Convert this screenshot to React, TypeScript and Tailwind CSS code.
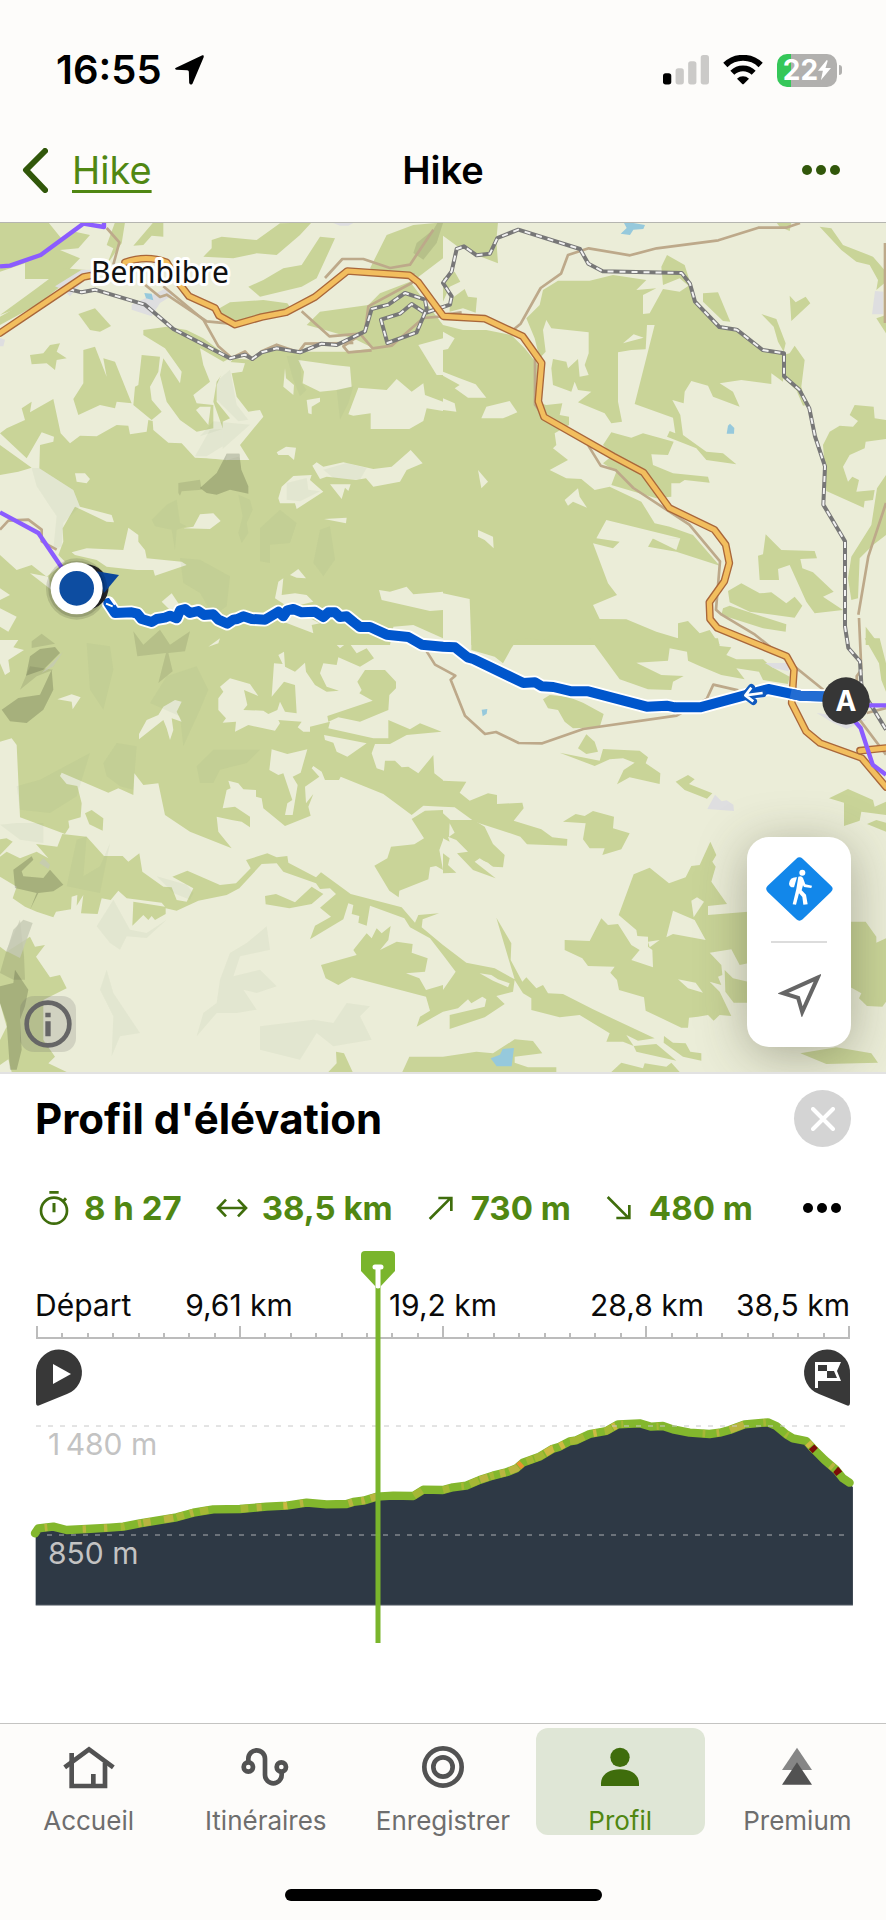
import React from "react";

interface Tile {
  x: number;
  y: number;
  forest: string[];
  clearing: string[];
}

interface Stat {
  label: string;
  value: string;
  icon: React.ReactNode;
}

interface Tab {
  title: string;
  icon: React.ReactNode;
  active?: boolean;
}

type Point = [number, number];

// Land cover, one entry per map tile. Every string is a closed polygon.
const tiles: Tile[] = [
  {
    x: 0,
    y: -24,
    forest: [
      "0,22 145,22 188,75 225,50 270,60 235,100 180,105 240,130 180,192 75,192 75,145 0,170",
      "345,22 375,22 365,85 320,150 340,100 320,90",
      "400,92 460,22 490,22 490,65 455,62 430,90",
      "635,75 665,65 770,75 840,25 935,22 900,60 830,120 770,115 700,130 610,125 635,100",
      "790,195 850,160 905,150 960,65 1005,70 950,190 905,215 780,245 745,215",
      "1110,160 1160,60 1240,30 1329,22 1329,130 1250,190 1160,185 1120,165",
      "690,262 790,255 862,265 880,290 800,310 720,325 640,290",
      "0,305 160,215 200,200 110,270 0,330",
      "0,300 110,220 190,160 260,165 40,285",
      "235,297 285,280 333,333 300,350 270,345",
      "90,420 130,415 150,390 180,385 170,410 200,430 170,435 165,465 140,445 95,448",
      "250,405 285,395 320,485 310,430 345,440 395,565 350,560 345,580 300,570 235,600 220,552 250,505",
      "430,345 500,335 560,345 610,370 690,430 670,440 600,400 610,450 630,500 580,540 590,565 640,570 640,640 590,650 540,615 500,560 480,480 490,430 540,505 545,470 495,400 430,360",
      "425,420 480,425 475,470 450,515 455,555 485,590 455,615 400,570 405,515 415,510",
      "0,655 20,640 75,615 65,580 95,560 90,592 160,552 182,655 210,685 240,662 290,664 350,630 385,632 390,658 440,650 445,615 458,618 460,645 505,683 545,685 585,728 670,732 670,645 640,560 650,500 700,430 760,435 800,400 900,410 1040,410 1120,400 1060,370 975,345 920,330 960,290 1105,270 1140,235 1230,200 1329,330 1329,1290 0,1290",
    ],
    clearing: [
      "680,440 735,445 727,470 695,475 710,545 745,590 780,585 790,605 720,690 748,735 675,735 585,725 610,660 668,640 668,620 690,610 650,560 650,510",
      "855,460 858,490 882,510 880,540 850,515",
      "895,435 965,445 1000,450 1050,455 1055,515 1010,525 960,530 908,505 912,470",
      "920,555 960,548 960,560 935,575 935,598 925,595",
      "1045,598 1075,518 1160,525 1190,492 1235,530 1270,505 1275,540 1329,560 1329,588 1280,580 1270,618 1228,642 1112,642 1112,595 1060,602",
      "1255,390 1329,370 1329,480 1310,480",
      "600,575 632,575 625,630 588,585",
      "830,712 858,695 888,698 882,735 865,720 835,720",
      "937,752 950,742 970,755 1030,742 1120,762 1175,755 1232,705 1268,745 1220,765 1200,800 1120,815 1098,790 1068,795 980,785 960,792",
      "845,815 880,783 935,780 930,795 970,830 890,882 885,865 840,865 835,850",
      "990,808 1052,808 1045,828 1035,818 1025,852",
      "972,912 1040,908 1038,925",
      "225,775 255,775 270,792 260,805 230,800",
      "0,780 55,770 95,758 0,690 0,655 80,730 125,652 162,665 160,680 120,690 118,760 220,825 240,875 335,900 342,922 320,920 225,875 188,940 190,980 175,1020 195,1040 140,1085 95,1050 50,1065 0,1020",
      "215,1012 260,1000 370,1005 385,938 415,960 415,980 435,1005 440,1030 545,1040 560,1050 465,1082 460,1065 410,1065 320,1055 290,1035 225,1020",
      "550,940 580,935 600,898 640,895 662,918 630,942",
      "90,1075 145,1085 155,1125",
      "825,1150 835,1100 850,1090 845,1140 885,1135 920,1140 940,1160 900,1170 910,1200 960,1225 935,1230 940,1255 850,1220 870,1180",
      "870,1080 895,1062 918,1090 890,1088",
      "1137,1125 1170,1130 1220,1115 1240,1138 1329,1130 1329,1185 1290,1188 1145,1155",
      "1170,1290 1180,1235 1240,1230 1329,1270 1329,1290",
      "485,1160 515,1135 545,1180 510,1185",
      "0,1120 30,1140 0,1155",
      "0,1180 50,1205 25,1250 0,1235",
    ],
  },
  {
    x: 1329,
    y: -24,
    forest: [
      "0,22 165,22 160,75 165,145 100,120 60,90 45,95 0,62",
      "0,190 35,170 52,200 20,215 0,260",
      "20,255 65,222 75,245 102,248 98,293 60,280 20,290",
      "0,330 60,345 130,345 205,360 245,400 285,450 275,560 310,570 358,565 350,600 378,605 378,630 335,655 340,690 330,700 375,735 320,765 370,790 415,792 455,825 500,815 595,860 635,925 680,935 750,960 830,1052 700,1010 615,995 630,970 712,970 490,915 460,970 530,980 510,1000 450,985 495,1105 522,1140 450,1170 470,1212 550,1213 640,1250 705,1270 705,1225 735,1218 770,1255 800,1245 830,1290 0,1290",
      "300,225 345,197 440,197 510,180 610,195 580,225 640,220 600,240 600,297 620,295 660,222 710,230 740,210 755,260 830,335 880,345 960,405 1020,415 1020,500 985,475 985,507 895,495 830,505 870,530 890,575 810,545 795,512 745,498 725,530 722,565 688,555 712,600 720,660 790,710 840,715 880,748 790,735 760,700 672,665 680,648 697,655 690,608 575,567 635,330 612,330 608,403 565,405 525,412 525,560 537,620 505,625 485,595 405,562 445,530 405,525 395,500 385,530 330,510 325,460 330,432 370,440 375,460 405,432 410,485 437,480 425,450 437,415 437,352 325,340 310,315 300,345 308,410 290,430 275,370 250,310 290,270",
      "655,155 672,120 725,150 760,262 740,215 710,190 660,210",
      "780,235 825,232 862,320 840,318 780,260",
      "1130,35 1165,40 1200,90 1290,125 1329,170 1329,200 1300,225 1305,195 1280,150 1240,140 1195,105",
      "1000,22 1045,22 1040,48 1010,35",
      "1040,242 1058,262 1088,245 1102,265 1045,318",
      "955,297 1000,312 1028,385 1022,410 1005,380 992,335",
      "1055,392 1085,435 1075,515 1090,570 1080,572 1060,525 1020,490 1020,420 1040,415",
      "505,652 565,668 600,655 692,680 675,720 625,718 630,750 690,775 795,785 800,803 725,795 710,805 685,805 685,845 640,850 505,810 520,770 480,745 510,720 480,690",
      "1140,690 1160,650 1190,632 1230,635 1245,618 1220,600 1235,570 1292,575 1295,610 1329,615 1329,672 1268,680 1265,700 1220,720 1200,755 1215,800 1228,785 1248,795 1240,830 1295,825 1290,855 1265,858 1262,878 1150,828",
      "1302,820 1329,780 1329,960 1290,990 1250,1030 1245,1150 1225,1155 1215,1090 1225,1025 1285,930",
      "1300,310 1329,300 1329,355",
      "945,1022 960,1018 968,958 1015,1005 1115,1008 1122,1030 1072,1032 1078,1060 1110,1072 1172,1130 1140,1145 1200,1185 1115,1195 1090,1160 1040,1050 1005,1062 1008,1095 950,1095",
      "855,1128 895,1105 950,1135 985,1132 1030,1165 1055,1145 1078,1172 1055,1208 920,1190 860,1162",
      "840,1180 860,1172 960,1205 1030,1228 1028,1250 960,1240 835,1200",
      "1268,1235 1310,1290 1268,1290",
    ],
    clearing: [
      "0,1135 80,1152 85,1290 0,1290",
      "105,765 135,800 115,820",
      "365,855 405,820 410,845 432,878 390,860 375,872",
      "105,945 150,965 152,1000 125,975 105,965",
      "115,610 130,575 200,558 223,592 180,610",
      "0,550 35,565 40,590 0,585",
      "0,470 50,490 98,508 130,548 75,548 35,520 50,510 0,482",
      "0,405 0,350 35,370 15,402",
      "540,385 572,358 602,368 565,378",
      "625,968 712,970 700,1005",
    ],
  },
  {
    x: 0,
    y: 1251,
    forest: [
      "0,-5 990,-5 1020,25 1045,5 1070,40 1100,25 1122,55 1080,80 1015,52 1010,75 970,70 960,100 980,140 1017,152 980,155 945,135 918,95 915,68 885,95 855,80 852,35 835,45 848,72 822,70 815,170 852,125 885,135 890,220 855,215 840,185 832,210 805,222 790,212 730,210 742,195 732,150 775,168 750,132 690,115 660,140 670,155 655,175 655,210 678,235 668,248 708,245 705,275 745,255 825,272 840,250 835,240 905,245 893,262 910,275 930,275 930,260 990,245 985,265 1120,295 1165,295 1165,240 1230,268 1260,250 1325,275 1220,285 1170,312 1125,312 1115,340 1130,385 1152,392 1155,362 1185,362 1205,382 1225,380 1255,400 1300,345 1303,400 1329,420 1329,500 1270,497 1235,525 1150,462 1022,410 1017,420 975,420 965,395 940,378 935,385 958,410 915,440 918,490 940,462 925,500 932,527 855,558 790,505 785,475 768,470 768,450 730,448 715,430 685,422 692,445 680,450 668,505 705,500 750,530 750,562 725,545 695,540 650,530 655,575 695,625 570,575 495,525 475,430 430,435 403,400 400,465 355,445 325,458 185,398 180,408 200,432 232,438 245,490 242,532 205,542 208,562 195,582 60,532 50,315 35,295 0,305",
      "1095,90 1155,90 1188,125 1188,145 1168,165 1165,210 1080,245 1015,232 985,245 982,228 1118,182 1078,160 1085,150 1072,125",
      "108,612 172,620 187,582 260,590 312,648 368,648 385,665 418,640 427,695 490,740 515,742 530,780 560,785 580,745 517,710 562,692 660,735 708,730 752,685 738,660 802,640 830,652 862,648 865,668 948,712 963,697 1052,762 1205,802 1245,848 1255,825 1317,820 1268,838 1265,862 1329,915 1329,945 1290,895 1230,862 1213,835 1110,797 1100,857 1075,848 1078,828 1055,822 1060,795 1045,790 1030,838 930,898 945,857 993,830 960,803 1008,762 990,745 960,747 948,730 850,695 830,670 785,672 718,745 680,765 595,782 530,812 497,805 497,822 465,840 455,828 445,840 430,825 397,857 400,785 495,800 485,788 380,775 355,752 332,780 305,775 293,822 243,820 250,765 230,797 232,765 215,770 213,808 168,815 160,832 110,815 75,800 38,775 50,740 0,710 0,650 20,635 60,655 110,635 145,655",
      "795,768 828,762 885,787 935,740 970,762 935,792 868,805 797,793",
      "255,520 275,510 310,535 308,572 268,553",
      "0,598 20,595 38,605 0,645",
      "1235,537 1275,512 1329,510 1329,600 1318,630 1329,690 1308,678 1290,682 1285,718 1198,752 1196,772 1168,752 1123,677 1162,655 1173,620 1243,613 1272,595",
      "963,975 1070,945 1060,930 1100,880 1115,895 1130,865 1145,880 1172,858 1165,900 1140,930 1190,905 1238,912 1235,938 1283,955 1275,995 1218,1000 1258,1015 1278,1050 1329,1035 1329,1115 1250,1160 1260,1130 1290,1112 1278,1070 1055,1012 1015,1035 977,1015",
      "985,1296 1010,1270 1008,1235 1032,1240 1058,1296",
      "1207,1296 1228,1250 1329,1250 1329,1296",
      "0,920 20,935 90,890 105,920 135,915 108,950 150,1012 180,1005 200,1045 130,1080 130,1200 165,1250 145,1270 200,1296 0,1296",
    ],
    clearing: [
      "417,282 440,240 475,225 490,200 525,180 545,185 530,215 545,245 515,235 520,270 510,300 500,265 490,240 417,298",
      "172,178 215,163 242,172 218,208 215,185",
      "972,285 1100,310 1042,350 1010,335 1000,308 975,300",
      "815,328 862,342 922,328 902,398 878,410 893,435 878,525 855,525 862,490 877,480 850,400 835,405 808,390",
      "0,0 55,0 40,22 72,30 25,60 30,95 15,105 0,70",
      "625,20 660,-5 655,10",
      "0,1090 20,1160 0,1200",
      "0,1275 25,1258 35,1296 0,1296",
    ],
  },
  {
    x: 1329,
    y: 1251,
    forest: [
      "85,-5 225,-5 205,25 180,70 155,50 85,30",
      "440,-5 825,-5 830,18 865,22 850,45 880,58 960,58 985,80 1040,110 1035,132 960,120 948,95 880,85 905,118 835,105 770,78 735,62 732,35 680,25 675,62 580,68 655,105 722,108 690,125 685,150 615,148 530,118",
      "240,-5 400,-5 400,5",
      "300,178 320,165 375,170 420,188 482,222 470,262 390,265 365,245 345,210 315,205",
      "405,325 430,283 455,305 465,335 430,342",
      "350,338 470,362 480,327 590,332 615,352 608,370 652,400 650,432 560,412 522,433 542,390 575,368 540,355 500,358 455,378",
      "698,425 735,405 755,418 738,432 808,460 792,476 725,450",
      "0,422 70,425 50,458 80,482 135,460 162,465 162,492 238,488 242,505 212,542 295,568 328,592 373,597 372,617 252,613 232,590 95,545 35,502 0,500",
      "0,520 22,540 92,540 125,560 150,612 185,645 180,682 150,680 110,655 95,665 158,715 90,690 42,640 75,635 40,600 15,590 20,605 0,595",
      "0,640 20,655 15,675 40,698 0,700",
      "360,545 398,522 425,528 450,513 513,530 510,565 560,580 535,628 478,645 485,625 440,625 420,598 428,550",
      "1158,475 1215,447 1290,480 1295,500 1329,485 1329,525 1255,515 1250,542 1203,558 1203,488",
      "1272,552 1300,540 1329,548 1329,575",
      "1265,-5 1310,-5 1329,70 1329,155 1315,120 1308,70",
      "527,825 572,703 620,683 678,730 728,712 745,678 770,675 802,605 820,645 808,665 818,680 805,725 852,792 795,798 795,825 915,815 915,970 890,975 865,928 800,938 835,975 838,1005 825,1010 835,1035 800,1025 830,1055 865,1128 830,1125 812,1142 795,1125 765,1130 738,1133 735,1163 715,1163 608,1112 603,1072 528,1050 522,1020 502,998 515,980 435,978 418,955 365,930 365,900 440,903 475,835 495,855 525,852 565,915 590,930 565,960 630,982 628,930 615,920 615,890 583,888 580,870",
      "845,990 870,1015 915,1025 915,1088 872,1088 847,1055",
      "1220,845 1268,845 1300,890 1300,908 1329,895 1329,1085 1318,1100 1272,1098 1248,1075 1255,1060 1220,1040",
      "0,915 70,968 155,985 215,1018 160,833 205,910 203,960 238,1025 250,1012 280,1045 300,1035 315,1060 360,1062 450,1108 635,1195 585,1202 550,1185 572,1218 540,1205 490,1205 500,1180 410,1125 350,1132 265,1110 265,1075 240,1060 215,1020 210,1055 160,1068 185,1092 125,1132 20,1167 20,1125 125,1100 130,1078 118,1070 85,1090 75,1078 45,1105 0,1115 0,1050 38,995 0,945",
      "572,1218 640,1212 700,1262 580,1235",
      "663,1188 690,1208 728,1210 742,1235 775,1240 775,1262 720,1250 662,1208",
      "0,1250 100,1235 150,1240 215,1198 270,1203 298,1240 215,1250 215,1268 255,1282 340,1282 340,1296 0,1296",
      "505,1296 535,1268 600,1285 605,1270 670,1280 685,1268 710,1296",
      "1072,1240 1180,1222 1285,1240 1305,1268 1150,1272",
    ],
    clearing: [
      "690,812 755,840 788,900 690,882 670,892",
      "745,782 762,772 783,785 752,832",
      "705,1018 758,1028 780,1058 735,1045",
      "110,1000 145,1005 165,1018 200,1030 195,1042 150,1022",
      "20,550 35,578 18,590",
      "108,658 135,668 150,682 130,685",
      "650,900 620,922 615,905",
    ],
  },
];

// Relief shading drawn over the land cover
const lightShade = [
  "650,475 690,440 710,545 745,590 715,595 650,530",
  "585,700 630,620 668,618 668,670 620,700",
  "640,595 750,605 668,678 668,618 600,640",
  "860,780 920,765 925,800 960,805 900,835 860,830",
  "970,740 1040,720 1100,735 1080,770 1000,765",
  "95,735 118,735 220,800 240,850 190,900 185,970 160,980 170,880 110,790",
  "455,890 500,845 530,830 540,900 560,910 530,920 525,980 515,920 465,910",
  "715,815 750,830 758,860 740,900 745,930 725,960 715,930 728,880",
  "540,1005 600,1010 690,1060 680,1150 640,1180 600,1110 550,1080",
  "780,915 840,860 890,900 870,960 810,965 810,1020 780,1015",
  "960,920 990,910 1005,1010 970,1060 940,1020",
  "860,400 900,395 905,480 920,500 900,520 880,470",
  "1010,500 1060,490 1045,540 1020,590",
  "260,1260 330,1270 340,1340 310,1460 270,1400",
  "590,1330 625,1400 600,1460 550,1570 540,1480 450,1440 500,1360",
  "310,1620 350,1560 410,1570 400,1700 360,1690 320,1660",
  "590,1630 640,1580 780,1580 740,1620 660,1640 640,1680 600,1680",
  "50,1690 120,1670 270,1590 230,1720 150,1770 60,1760",
  "200,1990 230,1850 260,1840 250,1960 300,1930 330,1860 300,2010",
  "290,2110 340,2030 390,2120 440,2130 500,2090 440,2145 380,2140 360,2180 330,2160",
  "470,1960 560,1985 580,2010 570,2030 520,2010",
  "300,2300 320,2240 340,2310 420,2430 360,2440 335,2500 340,2380",
  "590,2440 610,2370 650,2340 660,2270 690,2190 740,2160 800,2110 810,2180 720,2200 700,2260 780,2240 830,2290 770,2310 730,2300 770,2360 710,2370 650,2370",
  "780,2410 940,2390 1000,2400 1040,2340 1110,2350 1080,2380 1115,2450 1000,2470 950,2430 900,2510 780,2480",
  "0,1805 50,1800 130,1800 130,1860 60,1850",
];

const midShade = [
  "535,780 600,770 605,800 545,805 540,818 535,810",
  "1250,60 1300,20 1312,0 1329,0 1310,60 1270,110 1240,90",
  "400,1225 430,1265 480,1220 510,1265 570,1225 555,1285 505,1290 518,1345 475,1380 498,1290 412,1300",
  "95,1255 125,1232 165,1262 95,1275",
  "20,2180 60,2090 72,2200 75,2270 40,2270 0,2250",
  "60,1400 90,1330 160,1340 110,1360",
];

const darkShade = [
  "680,692 718,692 724,740 745,790 745,812 690,800 650,815 620,810 600,795 650,750",
  "90,1300 120,1278 165,1272 180,1290 130,1340 78,1358",
  "5,1460 55,1425 120,1415 155,1340 160,1400 130,1460 80,1500 30,1495",
  "40,1940 95,1900 100,1910 65,1945 70,1960 130,1965 150,1940 190,1985 160,2005 115,2010 90,2060 110,2010 45,1995",
  "0,2290 40,2280 45,2240 85,2300 75,2350 60,2390 65,2480 50,2540 30,2540 20,2400 0,2340",
];

// Bare slopes that catch the shade
const greyShade = [
  "680,692 718,692 720,700 678,712",
  "125,1350 188,1288 160,1330",
  "70,2090 98,2100 60,2205 20,2185 40,2120",
  "118,1920 130,1905 150,1925 145,1938",
];

const lakes = [
  "1872,0 1900,0 1935,6 1930,18 1900,20 1890,36 1862,32 1880,15",
  "2190,602 2203,615 2202,632 2180,632 2184,608",
  "433,210 455,212 460,232 438,226",
  "1445,1460 1462,1458 1460,1472 1448,1480",
  "1472,2506 1500,2495 1508,2478 1542,2475 1535,2530 1490,2530",
];

const towns = [
  "165,190 245,140 280,140 210,220 190,200",
  "395,245 500,195 520,215 480,240 455,280 395,260",
  "2625,204 2650,206 2650,274 2616,274",
  "2295,1320 2370,1320 2365,1345 2320,1335",
  "2450,1470 2530,1480 2600,1490 2540,1518 2500,1500",
  "2122,1758 2145,1715 2165,1735 2180,1732 2200,1745 2202,1764",
  "0,345 15,350 10,370 0,370",
  "1000,0 1060,0 1045,8 1020,8",
];

const tracks = [
  "M320 15 L358 58 340 125",
  "M435 185 L480 222 500 215 620 295 690 302",
  "M490 190 L610 290 655 370 695 405 735 385 757 410 785 385 830 365 895 388 915 362 1060 360",
  "M905 265 L988 340 1080 332 1118 376 1175 368 1270 285 1329 280",
  "M975 165 L1027 108 1090 108 1170 135 1230 125 1300 20",
  "M1240 150 L1235 180 1105 250 1095 325 1030 370 1045 388 1115 382",
  "M1540 320 L1562 302 1622 195 1683 152 1704 96 1766 76 1890 97 1970 76 2155 52 2275 14 2358 14 2400 0",
  "M1335 275 L1385 268 M1605 405 V545 L1640 590",
  "M1765 668 L1802 728 1848 742 1900 795 2068 905 2160 1015 2148 1160 2165 1175 2265 1235 2470 1400",
  "M2658 840 L2605 1000 2575 1175 M2577 1185 L2584 1340 2570 1360 2572 1400 M2655 60 V300",
  "M0 920 L25 893 85 890 125 920 125 955 170 980",
  "M1280 1285 L1305 1325 1366 1358 1352 1370 1395 1478 1455 1533 1488 1527 1556 1560 1627 1561 1750 1518 2030 1478 2120 1428 2140 1385 2215 1402",
  "M2560 1465 L2658 1595 M2600 1470 L2658 1455",
];

const highways = [
  "M0 330 L250 162 270 158 M375 118 Q440 95 500 118 L540 185 567 220 645 255 657 278 705 305 785 282 858 268 945 222 1042 144 1228 157 1255 178 1330 280 1455 287 1568 340 1625 420 1615 535 1632 582 1840 700 1930 748 2008 855 2143 920 2177 965 2188 1020 2173 1075 2128 1138 2130 1188 2152 1215 2360 1300 2382 1340 2375 1440 2418 1525 2460 1560 2585 1605 2658 1692",
  "M2658 1575 L2580 1583",
];

const railways = [
  "M205 198 L245 208 285 200 435 245 520 318 690 406 735 395 757 408 785 388 830 376 900 388 965 362 1010 366 1095 325 1115 258 1165 245 1215 210 1275 230 1280 258 1250 328 1162 360 1143 290 1200 272 1235 243 1275 270 1350 245 1355 220 1329 180 1355 145 1370 78 1392 70 1430 97 1470 92 1492 45 1555 20 1740 78 1765 122 1808 145 2045 150 2070 182 2085 236 2158 312 2210 320 2288 381 2352 391 2352 460 2398 500 2428 556 2445 640 2475 730 2470 845 2535 955 2535 1210 2545 1275 2580 1315 2585 1400 2658 1520",
];

const rides = [
  "M0 130 L30 128 122 96 250 2 312 12 V0",
  "M0 868 L115 930 200 1055",
  "M2600 1447 H2658 M2560 1490 L2582 1515 2618 1625 2658 1655",
];

const route =
  "M325 1140 L345 1170 395 1168 412 1172 425 1188 455 1197 470 1188 495 1184 510 1178 530 1186 540 1162 555 1158 570 1170 595 1164 612 1176 640 1174 655 1190 682 1202 700 1190 712 1188 730 1180 755 1188 795 1190 835 1166 850 1180 862 1162 880 1158 905 1168 945 1166 970 1182 985 1168 1005 1168 1020 1182 1040 1180 1062 1198 1080 1212 1110 1212 1160 1235 1225 1242 1265 1265 1329 1271 1365 1273 1403 1303 1420 1308 1570 1380 1605 1378 1625 1390 1660 1392 1715 1405 1765 1405 1940 1451 2000 1448 2025 1453 2100 1453 2305 1398 2400 1418 2520 1421";

// Elevation samples
const profile: Point[] = [
  [105, 400], [115, 385], [160, 380], [200, 390], [260, 387], [330, 383],
  [370, 380], [420, 370], [470, 362], [530, 352], [580, 338], [640, 328],
  [720, 327], [800, 320], [860, 317], [920, 308], [980, 313], [1040, 312],
  [1060, 306], [1090, 302], [1130, 290], [1180, 287], [1240, 288], [1270, 269],
  [1329, 270], [1359, 262], [1399, 257], [1439, 240], [1479, 227], [1519, 217],
  [1549, 205], [1569, 188], [1619, 170], [1659, 146], [1679, 140], [1709, 124],
  [1729, 121], [1769, 102], [1819, 93], [1854, 73], [1919, 70], [1954, 80],
  [1989, 78], [2019, 88], [2069, 98], [2129, 102], [2159, 98], [2189, 90],
  [2234, 73], [2304, 67], [2329, 78], [2359, 103], [2379, 115], [2419, 123],
  [2439, 145], [2474, 180], [2509, 210], [2529, 235], [2549, 248],
];

// [from, to, colour] stretches where the slope gets steeper
const slopes: [number, number, string][] = [
  [134, 142, "#b9b540"], [248, 258, "#b9b540"], [312, 322, "#b9b540"],
  [362, 374, "#a5b835"], [414, 424, "#b9b540"], [430, 452, "#b9b540"],
  [492, 520, "#b9b540"], [530, 552, "#a5b835"], [570, 580, "#b9b540"],
  [600, 625, "#a5b835"], [722, 745, "#a5b835"], [770, 785, "#b9b540"],
  [850, 862, "#cdb942"], [900, 910, "#b9b540"], [1046, 1058, "#b9b540"],
  [1084, 1094, "#b9b540"], [1112, 1134, "#b9b540"], [1242, 1266, "#a5b835"],
  [1329, 1348, "#a5b835"], [1384, 1392, "#a5b835"], [1410, 1436, "#a5b835"],
  [1440, 1464, "#b9b540"], [1470, 1482, "#a5b835"], [1500, 1516, "#b9b540"],
  [1528, 1554, "#b9b540"], [1556, 1566, "#e8922f"], [1580, 1600, "#a5b835"],
  [1604, 1632, "#a5b835"], [1636, 1660, "#cdb942"], [1680, 1692, "#cdb942"],
  [1710, 1752, "#a5b835"], [1780, 1790, "#cdb942"], [1814, 1836, "#a5b835"],
  [1838, 1848, "#cdb942"], [1864, 1870, "#a5b835"], [1970, 1976, "#a5b835"],
  [2108, 2116, "#a5b835"], [2150, 2158, "#b9b540"], [2190, 2232, "#b9b540"],
  [2290, 2298, "#a5b835"], [2358, 2364, "#a5b835"], [2424, 2433, "#cdb942"],
  [2435, 2446, "#7c0d08"], [2492, 2500, "#b9b540"], [2507, 2518, "#7c0d08"],
];

const heightAt = (x: number) => {
  const i = Math.max(1, profile.findIndex((p) => p[0] >= x));
  const [x0, y0] = profile[i - 1];
  const [x1, y1] = profile[i];
  return y0 + ((x - x0) / (x1 - x0)) * (y1 - y0);
};

const slice = (from: number, to: number) => {
  const inner = profile.filter((p) => p[0] > from && p[0] < to);
  return [[from, heightAt(from)], ...inner, [to, heightAt(to)]].join(" ");
};

const Dots = () => (
  <svg viewBox="0 0 38 10" className="w-[38px]" fill="currentColor">
    <circle cx="5" cy="5" r="5" />
    <circle cx="19" cy="5" r="5" />
    <circle cx="33" cy="5" r="5" />
  </svg>
);

const StatusBar = () => (
  <div className="flex h-[116px] items-center justify-between pt-6 pr-11 pl-14">
    <div className="flex items-center gap-3">
      <span className="text-[40px] leading-none font-semibold">16:55</span>
      <svg viewBox="0 0 94 96" className="w-[31px]">
        <path
          d="M6 42 L86 4 Q92 2 90 10 L56 90 Q50 96 46 88 L45 54 Q45 49 40 49 L7 48 Q0 46 6 42 Z"
          fill="#000"
        />
      </svg>
    </div>
    <div className="flex items-center gap-[14px]">
      <svg viewBox="0 0 139 90" className="w-[46px]">
        <rect x="0" y="55" width="25" height="34" rx="8" fill="#000" />
        <rect x="38" y="40" width="25" height="49" rx="8" fill="#cbcac8" />
        <rect x="76" y="19" width="25" height="70" rx="8" fill="#cbcac8" />
        <rect x="114" y="0" width="25" height="89" rx="8" fill="#cbcac8" />
      </svg>
      <svg viewBox="0 0 120 90" className="w-10">
        <path d="M7 30 A76 76 0 0 1 113 30" fill="none" stroke="#000" strokeWidth="18" />
        <path d="M28 53 A46 46 0 0 1 92 53" fill="none" stroke="#000" strokeWidth="17" />
        <path d="M42 71 A26 26 0 0 1 78 71 L63 86 Q60 89 57 86 Z" fill="#000" />
      </svg>
      <div className="flex items-center gap-[2px]">
        <div className="flex h-[33px] w-[60px] items-center justify-center rounded-[10px] bg-linear-to-r from-[#35c759] from-24% to-[#b1b0ae] to-24% text-white">
          <span className="text-[28px] leading-[33px] font-bold">22</span>
          <svg viewBox="0 0 40 62" className="w-[13px]">
            <path d="M27 0 L0 33 H15 L9 62 L40 25 H23 L30 2 Z" fill="#fff" />
          </svg>
        </div>
        <div className="h-[10px] w-[3px] rounded-r-full bg-[#b1b0ae]" />
      </div>
    </div>
  </div>
);

const Header = () => (
  <header className="grid h-[107px] grid-cols-3 items-center border-b border-[#b5b5b0] px-[22px] pt-[2px] text-[38px] leading-none">
    <a href="#hike" className="flex items-center gap-6 text-[#508712]">
      <svg viewBox="0 0 26 45" className="w-[26px]">
        <path
          d="M23 3 L4 22 L23 42"
          fill="none"
          stroke="#31570a"
          strokeWidth="6"
          strokeLinecap="round"
          strokeLinejoin="round"
        />
      </svg>
      <span className="underline decoration-3 underline-offset-[6px]">Hike</span>
    </a>
    <h1 className="text-center font-semibold">Hike</h1>
    <button aria-label="Plus d'options" className="mr-6 justify-self-end text-[#31570a]">
      <Dots />
    </button>
  </header>
);

const Terrain = () => (
  <svg
    viewBox="0 0 2658 2547"
    preserveAspectRatio="xMidYMid slice"
    className="block h-full w-full"
    fill="none"
    strokeLinejoin="round"
  >
    <rect width="2658" height="2547" fill="#ebedd8" />
    {tiles.map((tile) => (
      <g key={`${tile.x}-${tile.y}`} transform={`translate(${tile.x} ${tile.y})`}>
        {tile.forest.map((points) => (
          <polygon key={points} points={points} fill="#c9d498" />
        ))}
        {tile.clearing.map((points) => (
          <polygon key={points} points={points} fill="#ebedd8" />
        ))}
      </g>
    ))}
    {lightShade.map((points) => (
      <polygon key={points} points={points} fill="#7d9a6e" opacity="0.08" />
    ))}
    {midShade.map((points) => (
      <polygon key={points} points={points} fill="#4b5236" opacity="0.15" />
    ))}
    {darkShade.map((points) => (
      <polygon key={points} points={points} fill="#4b5236" opacity="0.28" />
    ))}
    {greyShade.map((points) => (
      <polygon key={points} points={points} fill="#c6c9b4" opacity="0.8" />
    ))}
    {towns.map((points) => (
      <polygon key={points} points={points} fill="#dedee0" />
    ))}
    {lakes.map((points) => (
      <polygon key={points} points={points} fill="#96c9dc" />
    ))}

    {tracks.map((d) => (
      <path key={d} d={d} stroke="#bda98a" strokeWidth="8" />
    ))}
    {railways.map((d) => (
      <g key={d}>
        <path d={d} stroke="#777" strokeWidth="12" />
        <path d={d} stroke="#f2f2f2" strokeWidth="6" strokeDasharray="18 18" />
      </g>
    ))}
    {highways.map((d) => (
      <g key={d} strokeLinecap="round">
        <path d={d} stroke="#a9673a" strokeWidth="23" />
        <path d={d} stroke="#f2be5e" strokeWidth="15" />
      </g>
    ))}
    {rides.map((d) => (
      <path key={d} d={d} stroke="#8b5cff" strokeWidth="13" />
    ))}

    <text
      x="273"
      y="180"
      fontSize="90"
      fontFamily="'Noto Sans', sans-serif"
      fill="#111"
      stroke="#fff"
      strokeWidth="18"
      paintOrder="stroke"
    >
      Bembibre
    </text>

    {/* Route */}
    <path d={route} stroke="#fff" strokeWidth="41" strokeLinecap="round" />
    <path d={route} stroke="#0056cc" strokeWidth="30" strokeLinecap="round" />
    <path d="M2372 1412 L2400 1418 2480 1421" stroke="#226cd2" strokeWidth="30" />
    <path
      d="M2288 1412 L2236 1417 M2254 1394 L2236 1417 2260 1435"
      stroke="#0f5abf"
      strokeWidth="22"
      strokeLinecap="round"
    />
    <path d="M2288 1410 L2236 1417 M2254 1394 L2236 1417 2260 1435" stroke="#fff" strokeWidth="8" />
    <path d="M318 1142 L338 1150 M330 1124 L345 1145" stroke="#fff" strokeWidth="6" />

    {/* Current position */}
    <circle cx="258" cy="1092" r="68" fill="#2b2b2d" />
    <path d="M290 1045 L357 1056 L312 1110 Z" fill="#0b479b" />
    <circle cx="230" cy="1098" r="92" fill="#000" opacity="0.12" />
    <circle cx="230" cy="1098" r="85" fill="#000" opacity="0.14" />
    <circle cx="230" cy="1096" r="65" fill="#0d4da1" stroke="#fff" strokeWidth="26" />

    {/* Start */}
    <circle cx="2538" cy="1434" r="71" fill="#363636" />
    <text
      x="2538"
      y="1464"
      textAnchor="middle"
      fontSize="84"
      fontWeight="700"
      fontFamily="Inter, sans-serif"
      fill="#fff"
    >
      A
    </text>
  </svg>
);

const MapView = () => (
  <section aria-label="Carte" className="relative aspect-[886/849] w-full overflow-hidden">
    <Terrain />
    <button
      aria-label="Informations"
      className="absolute bottom-5 left-5 flex size-14 items-center justify-center rounded-[14px] bg-[#6b6b6b]/20"
    >
      <svg viewBox="0 0 144 144" className="size-12">
        <circle cx="72" cy="72" r="64" fill="none" stroke="#666" strokeWidth="14" />
        <path d="M64 38 h16 v14 h-16 Z M64 64 h16 v45 h-16 Z" fill="#666" />
      </svg>
    </button>
    <div className="absolute right-[35px] bottom-[25px] flex h-[210px] w-[104px] flex-col items-center rounded-[22px] bg-white shadow-[0_8px_50px_rgba(60,60,40,0.38)]">
      <button aria-label="Type de carte" className="flex h-[104px] w-full items-center justify-center">
        <svg viewBox="0 0 201 192" className="w-[67px]">
          <path
            d="M91 5 Q100 -3 110 5 L195 86 Q205 95 195 105 L110 187 Q100 195 91 187 L5 105 Q-4 95 5 86 Z"
            fill="#1287ea"
          />
          <g fill="#fff">
            <circle cx="109" cy="47" r="9" />
            <path d="M93 61 L84 91 Q70 92 69 80 Q72 59 93 61 Z" />
            <path d="M97 59 Q107 55 111 63 L118 82 L138 86 L136 93 L114 90 L111 85 L107 100 L120 113 L125 142 L112 143 L109 120 L99 109 L90 143 L80 142 L91 96 Z" />
          </g>
        </svg>
      </button>
      <div className="h-[2px] w-14 bg-[#dcdcdc]" />
      <button aria-label="Me localiser" className="flex h-[104px] w-full items-center justify-center">
        <svg viewBox="0 0 128 128" className="w-[43px]">
          <path
            d="M118 11 L15 57 L60 71 L72 113 Z"
            fill="none"
            stroke="#666"
            strokeWidth="12"
          />
        </svg>
      </button>
    </div>
  </section>
);

const stats: Stat[] = [
  {
    label: "Durée",
    value: "8 h 27",
    icon: (
      <svg viewBox="0 0 96 102" className="w-8" fill="none" stroke="#3f6d0c" strokeWidth="8">
        <circle cx="48" cy="59" r="39" />
        <path d="M34 4 H62 M48 36 V64 M75 32 L84 22" strokeWidth="9" />
      </svg>
    ),
  },
  {
    label: "Distance",
    value: "38,5 km",
    icon: (
      <svg viewBox="0 0 96 102" className="w-8" fill="none" stroke="#3f6d0c" strokeWidth="8">
        <path d="M6 51 H90 M30 26 L6 51 L30 76 M66 26 L90 51 L66 76" />
      </svg>
    ),
  },
  {
    label: "Montée",
    value: "730 m",
    icon: (
      <svg viewBox="0 0 90 102" className="w-[30px]" fill="none" stroke="#3f6d0c" strokeWidth="8">
        <path d="M8 84 L72 20 M34 21 H73 V60" />
      </svg>
    ),
  },
  {
    label: "Descente",
    value: "480 m",
    icon: (
      <svg viewBox="0 0 90 102" className="w-[30px]" fill="none" stroke="#3f6d0c" strokeWidth="8">
        <path d="M8 18 L72 82 M34 81 H73 V42" />
      </svg>
    ),
  },
];

const ElevationChart = () => (
  <svg viewBox="0 0 886 405" className="mt-4 block w-full" fontFamily="Inter, sans-serif" fontSize="30">
    <g fill="#0a0a0a">
      <text x="35" y="71">Départ</text>
      <text x="239" y="71" textAnchor="middle">9,61 km</text>
      <text x="443" y="71" textAnchor="middle">19,2 km</text>
      <text x="647" y="71" textAnchor="middle">28,8 km</text>
      <text x="850" y="71" textAnchor="end">38,5 km</text>
    </g>

    {/* Ruler */}
    <path d="M36 93 H850" stroke="#bcbcbc" strokeWidth="2" />
    {Array.from({ length: 33 }, (_, i) => (
      <path
        key={i}
        d={`M${Math.round(37 + i * 25.38)} ${i % 8 === 0 ? 81 : 88} V93`}
        stroke="#bcbcbc"
        strokeWidth="2"
      />
    ))}

    {/* Start and finish pins */}
    <path
      d="M36 129 A23 23 0 1 1 67 149 L40 160 Q36 162 36 158 Z"
      fill="#383838"
    />
    <path d="M53 119 L71 129 L53 139 Z" fill="#fff" />
    <path
      d="M850 129 A23 23 0 1 0 819 149 L846 160 Q850 162 850 158 Z"
      fill="#383838"
    />
    <path d="M815 117 H841 L837 126 L841 136 H818 V143 H815 Z" fill="#fff" />
    <path d="M818 120 h9 v6 h-9 Z M827 126 h7 l3 7 h-10 Z" fill="#383838" />

    <g transform="translate(0 155) scale(0.3333)">
      <polygon points={`107,615 107,400 ${profile.join(" ")} 2559,262 2559,615`} fill="#2e3945" />
      <path d="M107 616 H2559" stroke="#8d939a" strokeWidth="3" />
      <polyline
        points={profile.join(" ")}
        fill="none"
        stroke="#83b72d"
        strokeWidth="25"
        strokeLinecap="round"
        strokeLinejoin="round"
      />
      {slopes.map(([from, to, color]) => (
        <polyline
          key={from}
          points={slice(from, to)}
          fill="none"
          stroke={color}
          strokeWidth="22"
        />
      ))}
    </g>
    <path d="M36 181 H845" stroke="#c8c8c8" strokeDasharray="5 7" />
    <path d="M47 290 H845" stroke="#a9adb1" strokeDasharray="5 7" />
    <text x="48" y="210" fill="#c3c3c3">1&#8201;480 m</text>
    <text x="48" y="319" fill="#c3c3c3">850 m</text>

    {/* Cursor */}
    <path d="M378 40 V398" stroke="#7ab52c" strokeWidth="5" />
    <path
      d="M365 6 H391 Q395 6 395 10 V26 L380 42 H376 L361 26 V10 Q361 6 365 6 Z"
      fill="#7ab52c"
    />
    <path d="M375 22 H381 M378 22 V41" stroke="#fff" strokeWidth="5" strokeLinecap="round" />
  </svg>
);

const Elevation = () => (
  <section className="flex-1 border-t-2 border-[#e2e2e2] bg-white pt-4">
    <div className="flex h-[57px] items-center justify-between px-[35px]">
      <h2 className="text-[42px] leading-none font-bold">Profil d'élévation</h2>
      <button
        aria-label="Fermer"
        className="flex size-[57px] items-center justify-center rounded-full bg-[#d4d4d4]"
      >
        <svg viewBox="0 0 24 24" className="size-6">
          <path d="M2 2 L22 22 M22 2 L2 22" stroke="#fff" strokeWidth="4" strokeLinecap="round" />
        </svg>
      </button>
    </div>
    <div className="mt-10 flex h-[42px] items-center justify-between pr-[45px] pl-[38px]">
      <ul className="flex items-center gap-[34px]">
        {stats.map((stat) => (
          <li key={stat.label} aria-label={stat.label} className="flex items-center gap-[14px]">
            {stat.icon}
            <span className="text-[33px] leading-none font-bold whitespace-nowrap text-[#508712]">
              {stat.value}
            </span>
          </li>
        ))}
      </ul>
      <button aria-label="Plus de statistiques">
        <Dots />
      </button>
    </div>
    <ElevationChart />
  </section>
);

const tabs: Tab[] = [
  {
    title: "Accueil",
    icon: (
      <g fill="none" stroke="#525252" strokeWidth="14">
        <path d="M11 76 L84 22 L157 76" />
        <path d="M32 33 V132 H132 V62 M97 96 V132" />
      </g>
    ),
  },
  {
    title: "Itinéraires",
    icon: (
      <g fill="none" stroke="#525252" strokeWidth="14">
        <circle cx="31" cy="75" r="14" />
        <circle cx="130" cy="75" r="14" />
        <path d="M31 61 V50 A25 25 0 0 1 81 50 V99 A25 25 0 0 0 131 99 V88" />
      </g>
    ),
  },
  {
    title: "Enregistrer",
    icon: (
      <g fill="none" stroke="#525252" strokeWidth="14">
        <circle cx="84" cy="75" r="56" />
        <circle cx="84" cy="75" r="29" />
      </g>
    ),
  },
  {
    title: "Profil",
    active: true,
    icon: (
      <g fill="#3f6d0c">
        <circle cx="84" cy="46" r="29" />
        <path d="M27 132 V124 C27 98 52 82 84 82 S141 98 141 124 V132 Z" />
      </g>
    ),
  },
  {
    title: "Premium",
    icon: (
      <>
        <path d="M84 17 L129 84 H39 Z" fill="#868686" />
        <path d="M84 61 L129 128 H39 Z" fill="#525252" />
      </>
    ),
  },
];

const TabBar = () => (
  <nav className="border-t border-[#c4c4c2] pt-1">
    <div className="grid grid-cols-5">
      {tabs.map((tab) => (
        <button
          key={tab.title}
          aria-current={tab.active ? "page" : undefined}
          className={`mx-1 flex h-[107px] flex-col items-center rounded-xl pt-[14px] text-[26px] ${
            tab.active ? "bg-[#dfe6d6] text-[#508712]" : "text-[#6e6e6e]"
          }`}
        >
          <svg viewBox="0 0 168 150" className="w-14">
            {tab.icon}
          </svg>
          <span className="mt-[15px] leading-7">{tab.title}</span>
        </button>
      ))}
    </div>
    <div className="flex justify-center pt-[54px] pb-[19px]">
      <div className="h-3 w-[317px] rounded-full bg-black" />
    </div>
  </nav>
);

const App = () => {
  return (
    <div className="flex min-h-screen flex-col bg-[#fdfcfa] font-[Inter,sans-serif] text-black">
      <StatusBar />
      <Header />
      <MapView />
      <Elevation />
      <TabBar />
    </div>
  );
};

export default App;
